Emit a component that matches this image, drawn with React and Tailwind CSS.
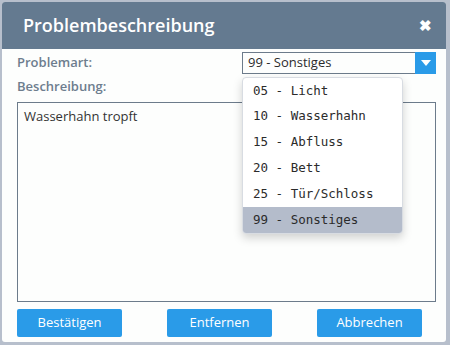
import React from 'react'

const options = ['05 - Licht', '10 - Wasserhahn', '15 - Abfluss', '20 - Bett', '25 - Tür/Schloss', '99 - Sonstiges']

export default function App() {
  const selected = '99 - Sonstiges'
  return (
    <div className="w-[450px] h-[345px] bg-[#b7bfcc] pt-[2px] pl-[2px] pr-[4px] pb-[3px] font-['Open_Sans',sans-serif]">
      <div className="relative w-full h-full bg-[#fdfefd] rounded-[3px] flex flex-col overflow-visible">
        {/* header */}
        <div className="h-[47px] bg-[#647a90] rounded-t-[3px] flex items-center justify-between pl-[21px] pr-[14px] shrink-0">
          <span className="text-white text-[18px] font-semibold">Problembeschreibung</span>
          <span className="text-white text-[15px] font-bold leading-none">✖</span>
        </div>

        <div className="flex flex-col pl-[15px] pr-[10px] pt-[3px] flex-1">
          <div className="flex items-center justify-between h-[22px]">
            <span className="text-[13px] font-semibold text-[#6d7d8e]">Problemart:</span>
            <div className="relative w-[194px] h-[22px] border border-[#6c7b8b] flex items-stretch">
              <div className="flex-1 flex items-center pl-[5px] text-[13px] text-[#2b2b2b]">{selected}</div>
              <div className="w-[21px] bg-[#2a9be8] flex items-center justify-center -my-px -mr-px">
                <svg width="10" height="6" viewBox="0 0 10 6"><path d="M0 0h10L5 6z" fill="#fff" /></svg>
              </div>
              {/* dropdown list */}
              <div className="absolute left-[-1px] top-[24px] w-[161px] bg-white rounded-[4px] border border-[#d8dce2] shadow-[0_4px_10px_rgba(0,0,0,0.18)] z-10 font-['DejaVu_Sans_Mono',monospace] overflow-hidden">
                {options.map((o) => (
                  <div key={o} className={`h-[25.8px] flex items-center pl-[10px] text-[12.5px] text-[#2b2b2b] ${o === selected ? 'bg-[#b4bccb]' : ''}`}>
                    {o}
                  </div>
                ))}
              </div>
            </div>
          </div>
          <div className="h-[24px] flex items-center mt-[1px]">
            <span className="text-[13px] font-semibold text-[#6d7d8e]">Beschreibung:</span>
          </div>
          <div className="mt-[3px] h-[200px] border border-[#6c7b8b] px-[6px] pt-[4px] text-[13px] text-[#333]">
            Wasserhahn tropft
          </div>
          <div className="flex gap-[45px] mt-[7px]">
            {['Bestätigen', 'Entfernen', 'Abbrechen'].map((b) => (
              <button key={b} className="w-[105px] h-[28px] bg-[#2a9be8] rounded-[2px] text-white text-[13px]">{b}</button>
            ))}
          </div>
        </div>
      </div>
    </div>
  )
}
